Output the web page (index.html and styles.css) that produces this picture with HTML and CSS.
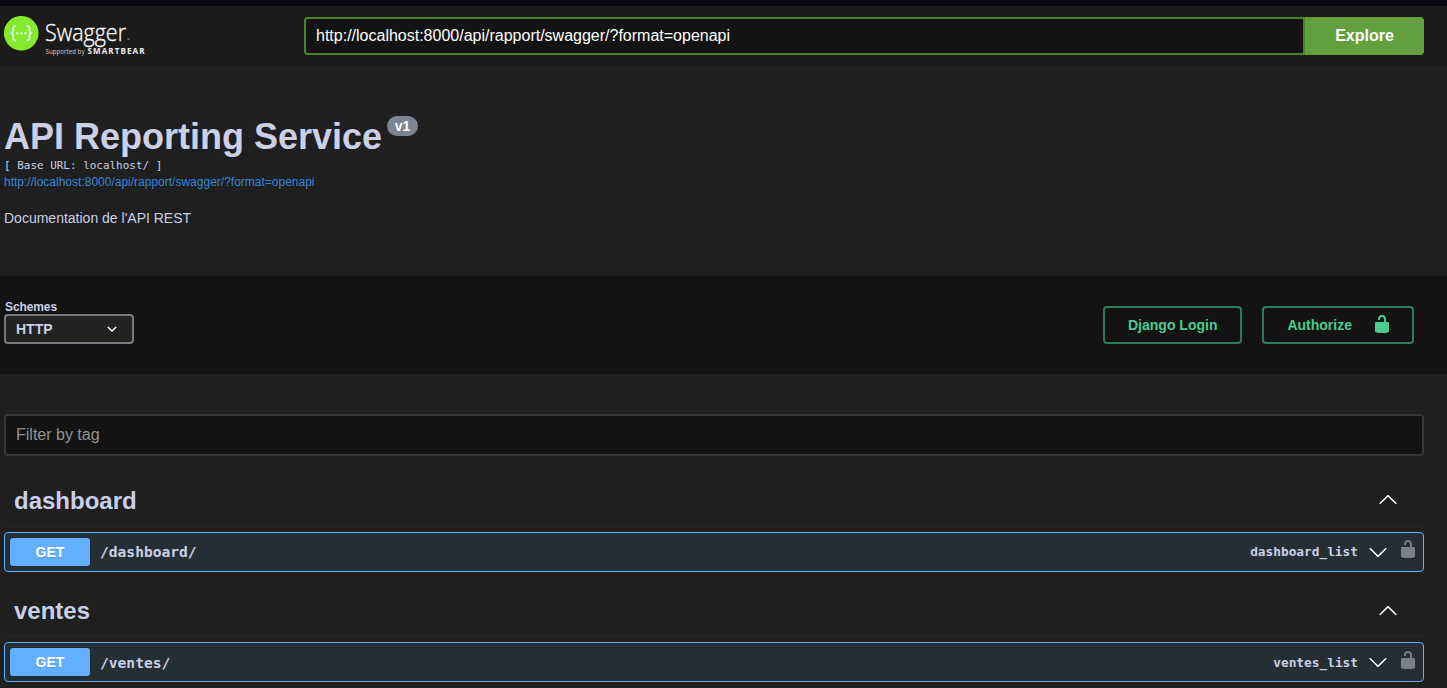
FILE: index.html
```html
<!DOCTYPE html>
<html lang="fr">
<head>
<meta charset="utf-8">
<title>API Reporting Service</title>
<link rel="stylesheet" href="styles.css">
</head>
<body>
<svg class="defs" width="0" height="0">
  <symbol id="unlocked" viewBox="0 0 20 20"><path d="M15.8 8H14V5.6C14 2.703 12.665 1 10 1 7.334 1 6 2.703 6 5.6V6h2v-.801C8 3.754 8.797 3 10 3c1.203 0 2 .754 2 2.199V8H4c-.553 0-1 .646-1 1.199V17c0 .549.428 1.139.951 1.307l1.197.387C5.672 18.861 6.55 19 7.1 19h5.8c.549 0 1.428-.139 1.951-.307l1.196-.387c.524-.167.953-.757.953-1.306V9.199C17 8.646 16.352 8 15.8 8z"/></symbol>
  <symbol id="arrow-down" viewBox="0 0 20 20"><path d="M17.418 6.109c.272-.268.709-.268.979 0s.271.701 0 .969l-7.908 7.83c-.27.268-.707.268-.979 0l-7.908-7.83c-.27-.268-.27-.701 0-.969.271-.268.709-.268.979 0L10 13.25z"/></symbol>
  <symbol id="arrow-up" viewBox="0 0 20 20"><path d="M17.418 14.908c.272.268.709.268.979 0s.271-.701 0-.969l-7.908-7.83c-.27-.268-.707-.268-.979 0l-7.908 7.83c-.27.268-.27.701 0 .969.271.268.709.268.979 0L10 7.767z"/></symbol>
  <symbol id="select-arrow" viewBox="0 0 20 20"><path d="M13.418 7.859c.271-.268.709-.268.978 0 .27.268.272.701 0 .969l-3.908 3.83c-.27.268-.707.268-.979 0l-3.908-3.83c-.27-.267-.27-.701 0-.969.271-.268.709-.268.978 0L10 11z"/></symbol>
</svg>
<header class="topbar">
  <svg class="logo" width="150" height="46" viewBox="0 0 150 46">
    <circle cx="17.2" cy="20.2" r="17.3" fill="#85ea2d"/>
    <g fill="none" stroke="#d3f3e0" stroke-width="1.9">
      <path d="M12.3 12.9c-2.6 0-3.1.8-3.1 2.6v2c0 1.6-.5 2.6-2.3 2.7 1.8.2 2.3 1.2 2.3 2.8v2c0 1.8.5 2.6 3.1 2.6"/>
      <path d="M22.3 12.9c2.6 0 3.1.8 3.1 2.6v2c0 1.6.5 2.6 2.3 2.7-1.8.2-2.3 1.2-2.3 2.8v2c0 1.8-.5 2.6-3.1 2.6"/>
    </g>
    <g fill="#d3f3e0"><circle cx="13.2" cy="20.2" r="1.2"/><circle cx="17.3" cy="20.2" r="1.2"/><circle cx="21.4" cy="20.2" r="1.2"/></g>
    <text class="logo-name" x="41" y="27.7" textLength="81" lengthAdjust="spacingAndGlyphs">Swagger</text>
    <rect x="123.5" y="25.6" width="2" height="1" fill="#aaa"/>
    <text class="logo-by" x="41.5" y="41.3" textLength="39" lengthAdjust="spacingAndGlyphs">Supported by</text>
    <text class="logo-brand" x="83.5" y="41.3" textLength="57" lengthAdjust="spacing">SMARTBEAR</text>
  </svg>
  <div class="url-form">
    <div class="url-input">http://localhost:8000/api/rapport/swagger/?format=openapi</div>
    <div class="explore">Explore</div>
  </div>
</header>
<section class="info">
  <h1 class="title">API Reporting Service<span class="version">v1</span></h1>
  <div class="base-url">[ Base URL: localhost/ ]</div>
  <a class="spec-link">http://localhost:8000/api/rapport/swagger/?format=openapi</a>
  <p class="description">Documentation de l'API REST</p>
</section>
<section class="schemes">
  <div class="scheme-field">
    <div class="scheme-label">Schemes</div>
    <div class="scheme-select">HTTP<svg class="icon"><use href="#select-arrow"/></svg></div>
  </div>
  <div class="auth">
    <div class="button">Django Login</div>
    <div class="button">Authorize<svg class="icon auth-lock"><use href="#unlocked"/></svg></div>
  </div>
</section>
<main class="operations">
  <div class="filter">Filter by tag</div>
  <h2 class="tag">dashboard<svg class="icon"><use href="#arrow-up"/></svg></h2>
  <div class="opblock">
    <span class="method">GET</span><span class="path">/dashboard/</span><span class="op-id">dashboard_list</span>
    <svg class="icon op-arrow"><use href="#arrow-down"/></svg><svg class="icon op-lock"><use href="#unlocked"/></svg>
  </div>
  <h2 class="tag tag-next">ventes<svg class="icon"><use href="#arrow-up"/></svg></h2>
  <div class="opblock opblock-next">
    <span class="method">GET</span><span class="path">/ventes/</span><span class="op-id">ventes_list</span>
    <svg class="icon op-arrow"><use href="#arrow-down"/></svg><svg class="icon op-lock"><use href="#unlocked"/></svg>
  </div>
</main>
</body>
</html>
```
FILE: styles.css
```css
* { box-sizing: border-box; }
html { overflow: hidden; }
body {
  margin: 0;
  background: #1f1f1f;
  color: #cbd0e6;
  font-family: "Liberation Sans", Arial, sans-serif;
  height: 688px;
  overflow: hidden;
}
.defs { display: block; }
.icon { width: 20px; height: 20px; flex: none; fill: currentColor; }

.topbar {
  display: flex;
  height: 66px;
  border-top: 6px solid #05050d;
  background: #1b1b1b;
  padding: 7px 23px 0 4px;
}
.logo { flex: none; width: 150px; height: 46px; }
.logo-name { font: 300 23px "Open Sans", sans-serif; fill: #fff; stroke: #fff; stroke-width: .3; }
.logo-by { font: 400 6.3px "Open Sans", sans-serif; fill: #ccc; }
.logo-brand { font: 700 8px "Open Sans", sans-serif; fill: #eee; }
.url-form { display: flex; flex: 1; height: 38px; margin: 4px 0 0 150px; }
.url-input {
  flex: 1;
  border: 2px solid #478426;
  border-radius: 4px 0 0 4px;
  background: #131313;
  color: #fff;
  font-size: 16px;
  line-height: 33px;
  padding-left: 10px;
}
.explore {
  width: 119px;
  border-radius: 0 4px 4px 0;
  background: #62a03f;
  color: #fff;
  font-size: 16px;
  font-weight: 700;
  line-height: 38px;
  text-align: center;
}

.info { height: 210px; padding: 50px 4px 0; }
.title { display: flex; margin: 0; font-size: 36px; line-height: 41px; }
.version {
  width: 31px;
  height: 20px;
  margin-left: 5px;
  border-radius: 10px;
  background: #7d8492;
  color: #fff;
  font-size: 14px;
  line-height: 20px;
  text-align: center;
}
.base-url { margin-top: 1px; font: 10.96px/16px "DejaVu Sans Mono", monospace; }
.spec-link { display: block; color: #3684db; font-size: 12px; line-height: 16px; }
.description { margin: 19px 0 0; font-size: 14px; line-height: 18px; }

.schemes {
  display: flex;
  justify-content: space-between;
  height: 98px;
  padding: 23px 33px 0 4px;
  background: #131313;
}
.scheme-label { height: 15px; padding-left: 1px; font-size: 12px; font-weight: 700; line-height: 17px; letter-spacing: -.1px; }
.scheme-select {
  display: flex;
  align-items: center;
  justify-content: space-between;
  width: 130px;
  height: 30px;
  border: 2px solid #777980;
  border-radius: 4px;
  background: #222;
  padding: 0 10px;
  font-size: 14px;
  font-weight: 700;
}
.scheme-select .icon { color: #fff; }
.auth { display: flex; gap: 20px; padding-top: 7px; }
.button {
  display: flex;
  height: 38px;
  border: 2px solid #2b7c58;
  border-radius: 4px;
  padding: 0 23px;
  color: #49cc90;
  font-size: 14px;
  font-weight: 700;
  line-height: 34px;
}
.auth-lock { margin: 6px -3px 0 20px; }

.operations { padding: 40px 23px 0 4px; }
.filter {
  height: 42px;
  border: 2px solid #38383c;
  border-radius: 4px;
  background: #131313;
  padding-left: 10px;
  color: #929292;
  font-size: 16px;
  line-height: 37px;
}
.tag {
  display: flex;
  justify-content: space-between;
  align-items: center;
  height: 53px;
  margin: 18px 0 5px;
  border-bottom: 1px solid #272727;
  padding: 2px 26px 0 10px;
  font-size: 24px;
  line-height: 28px;
}
.tag-next { margin-top: 12px; }
.tag .icon { margin-bottom: 4px; color: #fff; }
.tag-next .icon { margin-bottom: 2px; }
.opblock {
  display: flex;
  align-items: center;
  height: 40px;
  border: 1px solid #61affe;
  border-radius: 4px;
  background: #262e35;
  padding: 0 5px;
}
.method {
  width: 80px;
  height: 28px;
  border-radius: 3px;
  background: #61affe;
  color: #fff;
  font-size: 14px;
  font-weight: 700;
  line-height: 28px;
  text-align: center;
  text-shadow: 0 1px 0 rgba(0, 0, 0, .1);
}
.path { flex: 1; padding-left: 10px; font: 700 14.6px/20px "DejaVu Sans Mono", monospace; }
.op-id { font: 700 12.8px/20px "DejaVu Sans Mono", monospace; }
.op-arrow { margin: 0 10px; color: #fff; }
.op-lock { margin-bottom: 6px; color: #7c8084; }
.opblock-next .path, .opblock-next .op-id { padding-top: 2px; }
.opblock-next .op-lock { margin-bottom: 4px; }
```
